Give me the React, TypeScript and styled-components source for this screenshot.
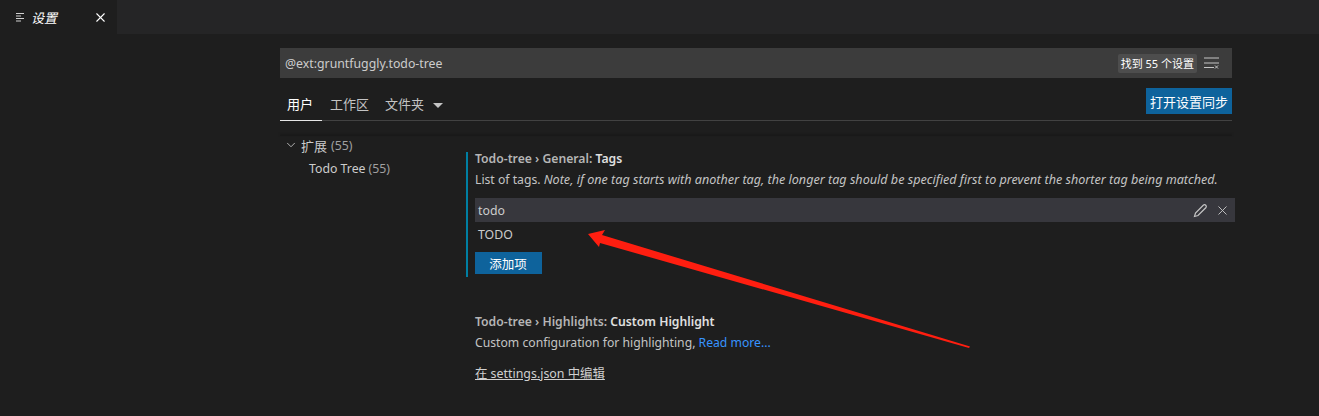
import React from "react";
import styled, { createGlobalStyle } from "styled-components";
import { X, ChevronDown } from "lucide-react";

const uiFont = `"Noto Sans", "Noto Sans CJK SC", sans-serif`;

const GlobalStyle = createGlobalStyle`
  html, body {
    margin: 0;
    height: 100%;
    background: #1e1e1e;
  }
  body {
    font-family: ${uiFont};
    font-size: 13px;
    color: #cccccc;
    overflow: hidden;
  }
`;

const Page = styled.div`
  position: relative;
  width: 1319px;
  height: 416px;
  background: #1e1e1e;
  overflow: hidden;
`;

const TabBar = styled.div`
  display: flex;
  height: 34px;
  background: #252526;
`;

const Tab = styled.div`
  display: flex;
  align-items: center;
  width: 117px;
  padding: 0 9px 0 15px;
  box-sizing: border-box;
  background: #1e1e1e;
  color: #fff;
`;

const TabLabel = styled.span`
  margin-left: 5px;
  flex: 1;
  font-style: italic;
  font-size: 13px;
`;

const Body = styled.div`
  display: flex;
  flex-direction: column;
  margin-left: 280px;
  width: 952px;
`;

const SearchBar = styled.div`
  display: flex;
  align-items: center;
  height: 30px;
  margin-top: 14px;
  padding: 0 13px 0 5px;
  background: #3c3c3c;
  color: #cccccc;
  font-size: 12.3px;
`;

const SearchText = styled.span`
  flex: 1;
`;

const CountBadge = styled.span`
  padding: 0 3px;
  height: 19px;
  line-height: 19px;
  border-radius: 2px;
  background: #4d4d4d;
  color: #fff;
  font-size: 11px;
`;

const FilterIcon = styled.svg`
  margin-left: 7px;
`;

const TabsRow = styled.div`
  display: flex;
  align-items: flex-end;
  justify-content: space-between;
  height: 42px;
  border-bottom: 1px solid #424242;
`;

const Targets = styled.div`
  display: flex;
  align-items: flex-end;
`;

const Target = styled.div<{ $active?: boolean }>`
  display: flex;
  align-items: center;
  height: 30px;
  padding: 0 ${(p) => (p.$active ? "9px" : "7px")} 4px 7px;
  margin-right: ${(p) => (p.$active ? "1px" : "2px")};
  margin-bottom: -1px;
  box-sizing: border-box;
  font-size: 13px;
  color: ${(p) => (p.$active ? "#fff" : "#c4c4c4")};
  border-bottom: 1px solid ${(p) => (p.$active ? "#e7e7e7" : "transparent")};
`;

const Caret = styled.span`
  width: 0;
  height: 0;
  margin-left: 9px;
  margin-top: 3px;
  border-left: 5px solid transparent;
  border-right: 5px solid transparent;
  border-top: 5px solid #c4c4c4;
`;

const SyncButton = styled.button`
  height: 26px;
  width: 86px;
  margin-bottom: 6px;
  padding: 0;
  border: 0;
  background: #0e639c;
  color: #fff;
  font-family: ${uiFont};
  font-size: 13px;
`;

const Divider = styled.div`
  height: 1px;
  margin-top: 14px;
  background: #191919;
  box-shadow: 0 -1px 2px #181818;
`;

const Columns = styled.div`
  display: flex;
`;

const Toc = styled.div`
  width: 186px;
  flex: none;
  margin-top: -1px;
`;

const TocGroup = styled.div`
  display: flex;
  align-items: center;
  gap: 1px;
  height: 20px;
  padding-left: 4px;
  color: #cccccc;
  font-size: 12.3px;
`;

const GroupName = styled.span`
  font-size: 13px;
  margin-left: 2px;
`;

const TocItem = styled.div`
  height: 22px;
  margin-top: 3px;
  line-height: 22px;
  padding-left: 29px;
  color: #cccccc;
  font-size: 12.3px;
`;

const Count = styled.span`
  color: #a0a0a0;
  margin-left: 3px;
`;

const Settings = styled.div`
  flex: 1;
  padding-top: 16px;
`;

const Setting = styled.div<{ $focused?: boolean }>`
  padding-left: 7px;
  padding-bottom: ${(p) => (p.$focused ? "3px" : "0")};
  border-left: 2px solid ${(p) => (p.$focused ? "#007fa3" : "transparent")};
`;

const Title = styled.div`
  height: 18px;
  line-height: 13px;
  font-size: 12.2px;
  font-weight: 600;
  color: #b5b5b5;

  b {
    font-weight: 600;
    color: #e0e0e0;
  }
`;

const Description = styled.div`
  height: 20px;
  line-height: 20px;
  font-size: 12.2px;
  color: #c4c4c4;
  white-space: nowrap;

  em {
    font-style: italic;
    font-size: 12.6px;
  }
`;

const List = styled.div`
  margin-top: 8px;
`;

const ListRow = styled.div<{ $selected?: boolean }>`
  display: flex;
  align-items: center;
  height: 24px;
  width: 760px;
  box-sizing: border-box;
  padding: 0 5px 0 3px;
  font-size: 12.3px;
  color: #cccccc;
  background: ${(p) => (p.$selected ? "#37373d" : "transparent")};
`;

const ListText = styled.span`
  flex: 1;
`;

const AddButton = styled.button`
  display: block;
  width: 67px;
  height: 22px;
  margin-top: 6px;
  padding: 0 1px 0 0;
  border: 0;
  background: #0e639c;
  color: #fff;
  font-family: ${uiFont};
  font-size: 12.5px;
`;

const RowIcons = styled.span`
  display: flex;
  align-items: center;
  gap: 7px;
  color: #c5c5c5;
`;

const Gap = styled.div`
  height: 38px;
`;

const Link = styled.a`
  color: #3794ff;
`;

const JsonLink = styled.a`
  display: inline-block;
  margin-top: 11px;
  font-size: 12.4px;
  color: #d0d0d0;
  text-decoration: underline;
`;

// red arrow annotation drawn over the page
const Annotation = styled.svg`
  position: absolute;
  left: 0;
  top: 0;
  pointer-events: none;
`;

const App: React.FC = () => {
  return (
    <Page>
      <GlobalStyle />
      <TabBar>
        <Tab>
          <svg width="11" height="11" viewBox="0 0 11 11">
            <path d="M1 1.5h8M1 4h5M1 6.5h8M1 9h5" stroke="#d0d0d0" strokeWidth="1" fill="none" />
          </svg>
          <TabLabel>设置</TabLabel>
          <X size={15} strokeWidth={1.7} color="#ffffff" />
        </Tab>
      </TabBar>
      <Body>
        <SearchBar>
          <SearchText>@ext:gruntfuggly.todo-tree</SearchText>
          <CountBadge>找到 55 个设置</CountBadge>
          <FilterIcon width="15" height="12" viewBox="0 0 15 12">
            <path d="M0 1h15M0 6h15M0 10.5h10" stroke="#c5c5c5" strokeWidth="1" fill="none" />
            <path d="M11 8.5l3 3M14 8.5l-3 3" stroke="#c5c5c5" strokeWidth="1" fill="none" />
          </FilterIcon>
        </SearchBar>
        <TabsRow>
          <Targets>
            <Target $active>用户</Target>
            <Target>工作区</Target>
            <Target>
              文件夹
              <Caret />
            </Target>
          </Targets>
          <SyncButton>打开设置同步</SyncButton>
        </TabsRow>
        <Divider />
        <Columns>
          <Toc>
            <TocGroup>
              <ChevronDown size={14} strokeWidth={1.4} color="#d0d0d0" />
              <GroupName>扩展</GroupName>
              <Count>(55)</Count>
            </TocGroup>
            <TocItem>
              Todo Tree<Count>(55)</Count>
            </TocItem>
          </Toc>
          <Settings>
            <Setting $focused>
              <Title>
                Todo-tree › General: <b>Tags</b>
              </Title>
              <Description>
                List of tags.{" "}
                <em>
                  Note, if one tag starts with another tag, the longer tag should be specified
                  first to prevent the shorter tag being matched.
                </em>
              </Description>
              <List>
                <ListRow $selected>
                  <ListText>todo</ListText>
                  <RowIcons>
                    <svg width="15" height="15" viewBox="0 0 15 15">
                      <path
                        d="M1.5 13.5L2.5 10L10.5 2a1.8 1.8 0 0 1 2.5 2.5L5 12.5Z"
                        stroke="#c5c5c5"
                        strokeWidth="1.2"
                        fill="none"
                      />
                    </svg>
                    <X size={15} strokeWidth={1.5} />
                  </RowIcons>
                </ListRow>
                <ListRow>
                  <ListText>TODO</ListText>
                </ListRow>
              </List>
              <AddButton>添加项</AddButton>
            </Setting>
            <Gap />
            <Setting>
              <Title>
                Todo-tree › Highlights: <b>Custom Highlight</b>
              </Title>
              <Description>
                Custom configuration for highlighting, <Link>Read more...</Link>
              </Description>
              <JsonLink>在 settings.json 中编辑</JsonLink>
            </Setting>
          </Settings>
        </Columns>
      </Body>
      <Annotation width="1319" height="416" viewBox="0 0 1319 416">
        <polygon points="588,234 605,230 602,235 970,346.5 969,348 600,243 599,247" fill="#ff1e10" />
      </Annotation>
    </Page>
  );
};

export default App;
